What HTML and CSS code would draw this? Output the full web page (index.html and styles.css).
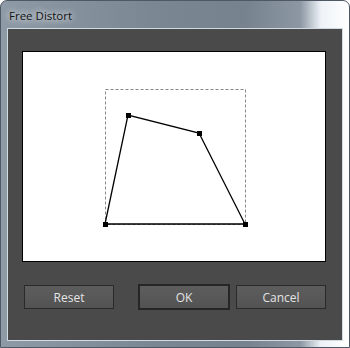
FILE: index.html
```html
<!DOCTYPE html>
<html>

<head>
    <meta name="viewport" content="width=device-width, initial-scale=1">
    <link rel="stylesheet" href="styles.css">
</head>

<body>

    <div class="window">
        <div class="titlebar">
            <span class="title">Free Distort</span>
        </div>

        <div class="client">
            <!-- preview area -->
            <div class="canvas">
                <svg width="302" height="209" viewBox="0 0 302 209">
                    <rect x="82.5" y="37.5" width="140" height="135" fill="none" stroke="#888" stroke-dasharray="3 2" />
                    <polygon points="82,172 105,63 176,81 222,172" fill="none" stroke="#000" stroke-width="1.3" />
                    <rect x="80" y="170" width="5" height="5" />
                    <rect x="103" y="61" width="5" height="5" />
                    <rect x="174" y="79" width="5" height="5" />
                    <rect x="220" y="170" width="5" height="5" />
                </svg>
            </div>

            <div class="buttons">
                <button class="btn">Reset</button>
                <button class="btn btn-default">OK</button>
                <button class="btn">Cancel</button>
            </div>
        </div>
    </div>

</body>

</html>
```

FILE: styles.css
```css
body {
    margin: 0;
    background: #fff;
}

.window {
    box-sizing: border-box;
    width: 350px;
    height: 348px;
    padding: 0 6px 6px 6px;
    border: 1px solid #4f5965;
    border-radius: 7px 7px 0 0;
    background: linear-gradient(to right, #8e9aa6, #7a8692 45%, #76828e 70%, #8c97a3 86%, #eef3f8 92%, #fff);
}

.titlebar {
    height: 27px;
    display: flex;
    align-items: center;
    padding-left: 1px;
}

/* 제목 뒤의 흐릿한 빛 */
.title {
    font-family: "Open Sans", sans-serif;
    font-size: 11.5px;
    color: #141414;
    padding: 1px 4px 0 1px;
    text-shadow: 0 0 6px rgba(255, 255, 255, 0.9), 0 0 10px rgba(255, 255, 255, 0.6);
}

.client {
    box-sizing: border-box;
    height: 313px;
    padding: 22px 0 0 14px;
    border: 1px solid #d2dae2;
    background: #4a4a4a;
}

.canvas {
    width: 302px;
    height: 209px;
    border: 1px solid #000;
    background: #fff;
}

.canvas svg {
    display: block;
}

.buttons {
    display: flex;
    align-items: center;
    margin: 22px 0 0 2px;
}

.btn {
    box-sizing: border-box;
    width: 90px;
    height: 24px;
    padding: 0;
    border: 1px solid #2a2a2a;
    background: linear-gradient(#5d5d5d, #535353);
    font-family: "Open Sans", sans-serif;
    font-size: 12px;
    color: #e4e4e4;
}

.btn-default {
    width: 92px;
    height: 26px;
    margin: 0 6px 0 24px;
    border: 2px solid #252525;
}
```
